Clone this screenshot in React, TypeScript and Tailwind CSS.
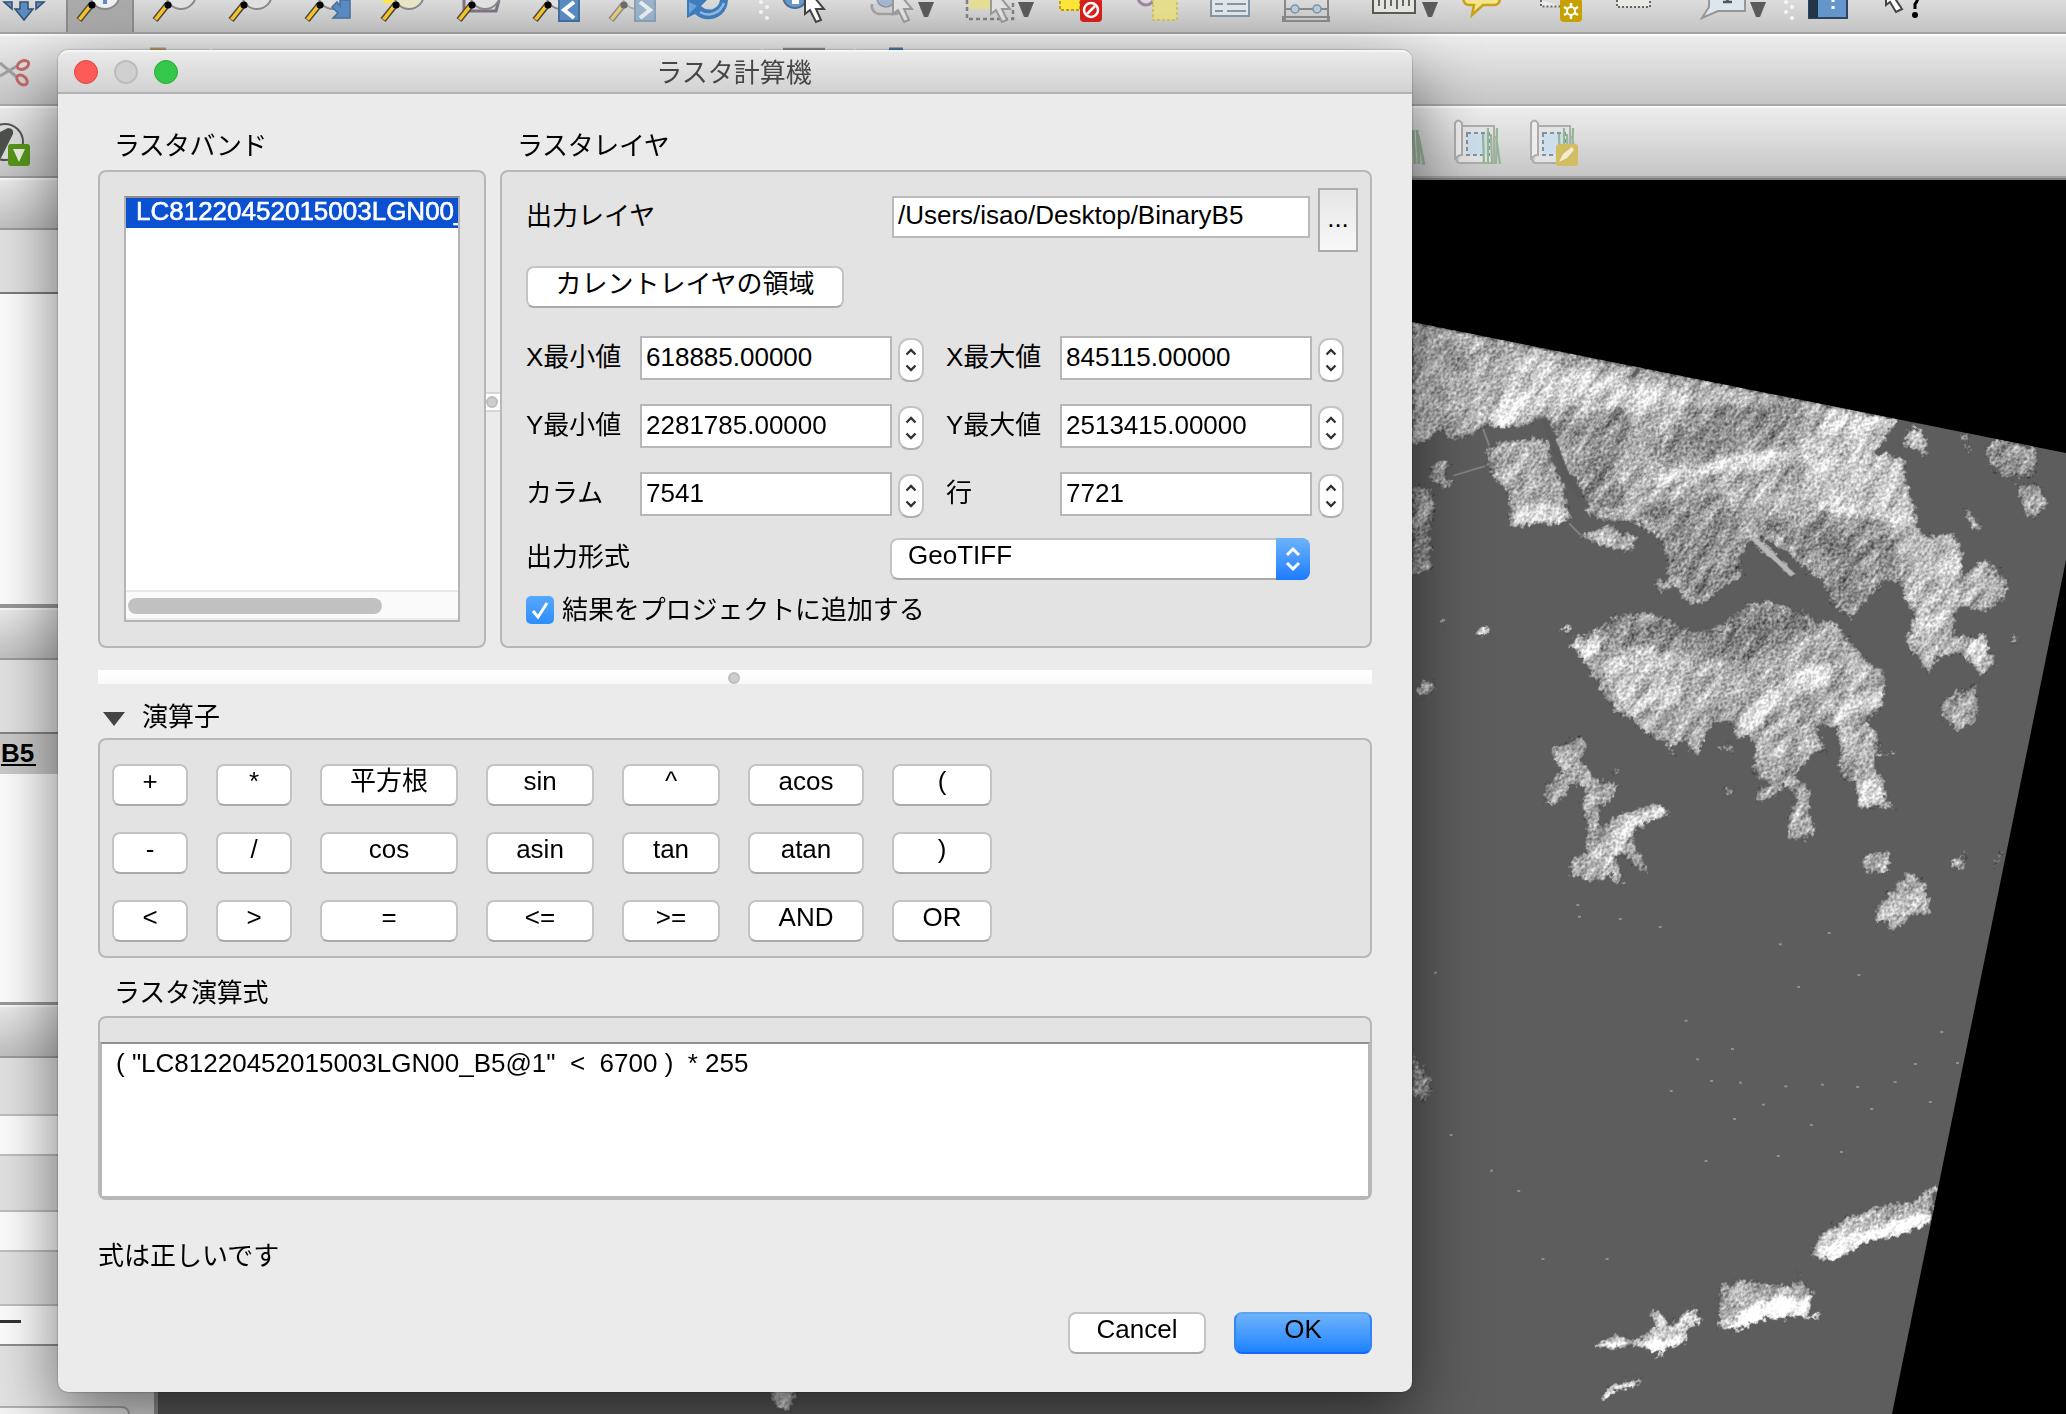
import React from "react";

const FONT = "font-['Liberation_Sans','Noto_Sans_CJK_JP',sans-serif]";

/* ---------- satellite raster ---------- */

const NORTH = [
  { c: "#a8a8a8", p: "28,-218 1172,52 1150,75 1140,110 1120,150 1165,155 1195,180 1185,235 1210,290 1220,365 1250,380 1305,372 1325,430 1325,490 1380,443 1430,500 1420,560 1380,592 1330,578 1310,585 1305,655 1350,665 1378,648 1385,710 1407,730 1370,772 1320,710 1275,710 1245,765 1190,680 1210,600 1190,570 1180,510 1140,508 1062,612 1010,565 1020,530 960,480 900,420 845,378 930,488 922,497 822,392 795,430 805,490 760,525 715,575 670,565 650,520 610,538 600,510 630,500 625,430 605,385 560,345 470,335 440,320 440,290 460,265 430,270 420,215 390,210 375,160 355,70 335,48 310,68 260,82 195,75 170,102 120,110 100,85 28,132" },
  { c: "#a6a6a6", p: "200,145 230,115 320,105 350,120 355,170 385,240 400,330 380,350 340,342 265,360 255,340 260,265 220,220" },
  { c: "#a8a8a8", p: "425,380 490,350 560,380 540,425 500,415 460,405" },
  { c: "#989898", p: "68,215 80,170 120,172 105,210 125,235 100,250" },
  { c: "#8e8e8e", p: "28,230 70,250 85,300 75,340 70,400 75,470 28,495" },
  { c: "#a2a2a2", p: "400,680 415,660 470,640 510,600 570,595 640,615 660,640 690,650 740,640 790,600 830,565 870,562 960,600 975,620 1020,620 1060,670 1090,720 1145,770 1135,860 1100,895 1130,950 1115,1010 1140,1080 1145,1120 1170,1142 1080,1142 1070,1070 1040,1060 1030,920 980,910 1005,985 975,988 930,1050 965,1090 965,1160 980,1215 955,1232 915,1228 915,1150 935,1120 905,1075 880,1110 840,1130 840,1095 870,1070 830,1045 835,960 820,945 790,945 780,900 745,900 720,930 705,1000 675,980 680,960 640,965 590,945 550,900 505,870 470,810 430,730" },
  { c: "#b0b0b0", p: "755,965 780,958 785,980 760,982" },
  { c: "#a8a8a8", p: "352,985 420,940 440,960 430,1010 460,1060 500,1070 518,1085 500,1115 470,1140 470,1190 540,1150 600,1130 640,1150 620,1178 590,1170 545,1220 588,1330 570,1320 520,1270 508,1290 527,1352 510,1350 490,1325 465,1352 400,1330 405,1290 440,1265 440,1180 430,1170 430,1080 395,1075 395,1105 360,1135 338,1130 340,1080 385,1045 370,1020" },
  { c: "#9c9c9c", p: "1270,860 1300,820 1355,795 1365,860 1350,905 1318,930 1280,890" },
  { c: "#969696", p: "1382,120 1410,110 1500,135 1505,170 1490,220 1420,215 1385,180" },
  { c: "#a0a0a0", p: "1450,235 1500,232 1525,290 1500,330 1470,325" },
  { c: "#b4b4b4", p: "1180,130 1205,68 1245,110 1235,165 1215,135" },
  { c: "#b4b4b4", p: "1320,92 1335,95 1347,150 1335,140" },
  { c: "#b4b4b4", p: "1330,300 1375,360 1350,360 1328,325" },
  { c: "#b4b4b4", p: "1088,1278 1110,1268 1150,1262 1153,1320 1095,1328" },
  { c: "#b0b0b0", p: "1120,1420 1200,1320 1238,1350 1250,1440 1205,1442 1160,1490 1145,1458 1120,1460" },
  { c: "#c0c0c0", p: "1295,1290 1315,1278 1330,1252 1325,1310 1305,1315" },
  { c: "#b0b0b0", p: "1397,1312 1415,1255 1416,1285" },
  { c: "#a0a0a0", p: "38,820 50,785 85,790 75,825 50,832" },
  { c: "#d8d8d8", p: "178,655 205,630 207,662" },
  { c: "#c8c8c8", p: "370,645 405,628 392,652" },
  { c: "#c8c8c8", p: "762,1088 785,1085 785,1102 768,1104" },
  { c: "#d0d0d0", p: "1438,668 1450,660 1457,680 1440,682" },
  { c: "#c0c0c0", p: "90,615 106,615 104,628 92,626" },
  { c: "#b0b0b0", p: "495,1045 505,1030 513,1040 505,1053" },
  { c: "#b8b8b8", p: "628,962 638,962 650,1008 640,1000" },
  { c: "#c8c8c8", p: "1120,990 1168,985 1168,992 1130,1000" },
];

/* brighter ridges and darker urban districts laid over the land */
const RELIEF = [
  { c: "#c8c8c8", p: "230,10 280,-125 600,-45 640,-30 700,0 690,10 560,40 440,30 330,-20 300,60 240,75 190,50" },
  { c: "#dcdcdc", p: "225,15 330,-10 320,40 250,70 195,50" },
  { c: "#cecece", p: "1000,20 1170,52 1130,130 1080,150 980,150" },
  { c: "#d4d4d4", p: "590,215 700,185 800,150 930,145 900,190 820,205 700,210 600,250" },
  { c: "#c2c2c2", p: "960,160 1160,155 1190,200 1210,320 1210,370 1130,330 1050,350 960,280" },
  { c: "#888888", p: "350,60 520,20 560,100 500,200 540,300 440,300 410,200" },
  { c: "#888888", p: "560,290 760,260 820,390 790,490 700,560 640,480 610,380" },
  { c: "#888888", p: "690,20 950,5 930,130 780,150 620,190 640,80" },
  { c: "#888888", p: "860,340 1000,310 1150,340 1180,480 1140,500 1050,590 950,450" },
  { c: "#bababa", p: "1200,390 1300,380 1320,460 1300,640 1240,750 1200,660 1230,560 1190,500" },
  { c: "#dcdcdc", p: "1330,690 1370,655 1385,700 1365,765" },
  { c: "#808080", p: "470,640 520,605 640,620 700,655 790,610 850,570 960,605 960,640 880,700 780,740 640,700 520,690" },
  { c: "#bebebe", p: "480,730 580,690 700,740 660,850 540,875 490,800" },
  { c: "#d2d2d2", p: "940,750 1015,735 1000,790 900,860 820,930 790,900 850,830" },
  { c: "#c6c6c6", p: "1000,850 1135,800 1130,860 1030,910" },
  { c: "#e0e0e0", p: "405,690 470,670 470,710 430,725" },
  { c: "#d4d4d4", p: "1080,1070 1135,1060 1140,1130 1080,1135" },
  { c: "#d0d0d0", p: "500,1210 600,1135 630,1155 560,1200 520,1260 480,1300 460,1290" },
  { c: "#cccccc", p: "270,300 370,290 390,345 270,350" },
];

const SOUTH = [
  { c: "#989898", p: "28,440 45,510 55,488 68,520 75,565 55,605 28,580" },
  { c: "#b0b0b0", p: "967,1065 990,1000 1060,950 1145,910 1205,905 1265,848 1250,965 1200,1000 1100,1025 1020,1083" },
  { c: "#ffffff", p: "975,1065 1040,1010 1100,985 1250,935 1248,965 1200,1000 1100,1028 1020,1083" },
  { c: "#a8a8a8", p: "750,1160 800,1140 860,1150 910,1155 950,1140 973,1180 960,1250 850,1260 800,1293 750,1285" },
  { c: "#ffffff", p: "800,1240 850,1200 950,1190 970,1180 960,1250 850,1260 800,1292 775,1288" },
  { c: "#ffffff", p: "940,1257 965,1250 1000,1232 980,1260" },
  { c: "#c0c0c0", p: "932,1110 948,1115 946,1125" },
  { c: "#c8c8c8", p: "453,1340 510,1300 550,1325 600,1280 593,1235 608,1228 635,1275 680,1228 702,1225 710,1260 670,1295 680,1325 600,1355 545,1335 520,1345" },
  { c: "#ffffff", p: "455,1340 520,1325 540,1330 520,1348" },
  { c: "#ffffff", p: "560,1330 640,1320 680,1320 630,1350 595,1356" },
  { c: "#f4f4f4", p: "640,1285 705,1245 705,1268 660,1295" },
  { c: "#e0e0e0", p: "600,1380 612,1355 625,1358" },
  { c: "#ffffff", p: "470,1495 500,1455 575,1432 545,1467 510,1470 480,1500" },
];

const SPECKS: [number, number][] = [
  [418, 15], [422, 50], [518, 57], [612, 81], [1010, 99], [895, 133], [1080, 225], [938, 261], [673, 362], [782, 447],
  [801, 548], [638, 573], [908, 559], [994, 554], [1077, 561], [1165, 546], [1213, 492], [1312, 489], [1248, 606], [1110, 627],
  [855, 614], [787, 657], [733, 543], [1039, 756], [890, 768], [720, 783], [120, 705], [215, 812], [279, 873], [336, 1077],
  [487, 1077], [1275, 396], [968, 675], [83, 218], [700, 478],
];

function SatelliteMap() {
  return (
    <svg className="absolute left-[158px] top-[180px]" width="1908" height="1234" viewBox="158 180 1908 1234">
      <defs>
        {/* the filter runs in a rotated frame so that the ridges follow the north-east grain of the hills */}
        <filter id="land" filterUnits="userSpaceOnUse" x="600" y="-100" width="2000" height="1900" colorInterpolationFilters="sRGB">
          <feTurbulence type="fractalNoise" baseFrequency="0.2" numOctaves="2" seed="4" result="edge" />
          <feDisplacementMap in="SourceGraphic" in2="edge" scale="12" xChannelSelector="R" yChannelSelector="G" result="shape" />
          <feTurbulence type="fractalNoise" baseFrequency="0.035 0.11" numOctaves="3" seed="11" />
          <feColorMatrix type="matrix" values="1 0 0 0 0 1 0 0 0 0 1 0 0 0 0 0 0 0 0 1" result="hills" />
          <feTurbulence type="fractalNoise" baseFrequency="0.3 0.4" numOctaves="2" seed="7" />
          <feColorMatrix type="matrix" values="1 0 0 0 0 1 0 0 0 0 1 0 0 0 0 0 0 0 0 1" result="grain" />
          <feComposite in="hills" in2="grain" operator="arithmetic" k2="0.55" k3="0.75" k4="-0.14" result="noise" />
          <feGaussianBlur in="shape" stdDeviation="2.5" result="soft" />
          <feComposite in="soft" in2="shape" operator="arithmetic" k2="0.5" k3="0.5" result="base" />
          <feComposite in="noise" in2="base" operator="arithmetic" k2="1" k3="1" k4="-0.47" result="lit" />
          <feComposite in="lit" in2="shape" operator="in" />
        </filter>
        <clipPath id="scene">
          <polygon points="158,71 1412,322 2066,453 2066,560 1892,1414 158,1414" />
        </clipPath>
      </defs>
      <rect x="158" y="180" width="1908" height="1234" fill="#000" />
      <g clipPath="url(#scene)">
        <rect x="158" y="180" width="1908" height="1234" fill="#5d5d5d" />
        <g transform="rotate(-52 1730 860)">
          <g filter="url(#land)">
            <g transform="rotate(52 1730 860)">
              <g transform="translate(1400 400) scale(.42474 .35714)">
                {NORTH.map((s, i) => <polygon key={i} points={s.p} fill={s.c} />)}
                {RELIEF.map((s, i) => <polygon key={i} points={s.p} fill={s.c} />)}
              </g>
              <g transform="translate(1400 900) scale(.42474 .33333)">
                {SOUTH.map((s, i) => <polygon key={i} points={s.p} fill={s.c} />)}
              </g>
              <polygon points="770,1385 795,1385 794,1402 785,1412 772,1404" fill="#bdbdbd" />
            </g>
          </g>
        </g>
        <g transform="translate(1400 400) scale(.42474 .35714)" fill="none">
          <path d="M338 50 390 215 425 270 M362 120 398 230" stroke="#5a5a5a" strokeWidth="14" />
          <path d="M562 -88 548 -65" stroke="#5d5d5d" strokeWidth="10" />
          <path d="M860 395 930 455" stroke="#5d5d5d" strokeWidth="9" />
          <path d="M830 385 925 490" stroke="#b8b8b8" strokeWidth="12" />
          <path d="M195 80 210 128 M125 212 200 185 M398 345 425 378" stroke="#8b8b8b" strokeWidth="4" />
          <path d="M655 640 760 650" stroke="#5d5d5d" strokeWidth="5" strokeDasharray="14 9" />
        </g>
        <g transform="translate(1400 900) scale(.42474 .33333)" fill="#909090">
          {SPECKS.map(([x, y], i) => <rect key={i} x={x - 3} y={y - 3} width="7" height="6" />)}
        </g>
      </g>
    </svg>
  );
}

/* ---------- main window chrome ---------- */

/* Toolbar cell; its drawing uses the toolbar's own x axis. */
function Cell({ x, w, h = 32, children }: { x: number; w: number; h?: number; children?: React.ReactNode }) {
  return (
    <svg className="shrink-0" width={w} height={h} viewBox={`${x} 0 ${w} ${h}`}>
      {children}
    </svg>
  );
}

function Lens({ x, faded, fill = "#e2e2e2" }: { x: number; faded?: boolean; fill?: string }) {
  return (
    <g transform={`translate(${x} 0)`} opacity={faded ? 0.5 : 1}>
      <circle cx="28" cy="-6" r="15" fill={fill} stroke="#8a8a8a" strokeWidth="2" />
      <path d="M15 4 2 20" stroke="#4a4a40" strokeWidth="6.500" />
      <path d="M14 5 2.500 19.500" stroke="#fcc629" strokeWidth="3.600" />
      <circle cx="15" cy="5" r="3.600" fill="#000" />
    </g>
  );
}

function Arrow({ x }: { x: number }) {
  return <path d={`M${x - 8} 2h16l-6 15h-4z`} fill="#5b5b5b" />;
}

function Pointer({ x, faded }: { x: number; faded?: boolean }) {
  return (
    <path
      d={`M${x} -14V14l5-4 6 12 5-2-5-11h8z`}
      fill={faded ? "#e2e2e2" : "#fff"}
      stroke={faded ? "#9a9a9a" : "#444"}
      strokeWidth="2"
    />
  );
}

function Grip({ x }: { x: number }) {
  return (
    <g fill="#f6f6f6">
      <circle cx={x - 3} cy="2" r="2" /><circle cx={x + 3} cy="7" r="2" />
      <circle cx={x - 3} cy="12" r="2" /><circle cx={x + 3} cy="18" r="2" />
    </g>
  );
}

function NavBar() {
  return (
    <div className="flex h-[34px] w-full items-start overflow-hidden border-b-2 border-[#a3a3a3] bg-gradient-to-b from-[#dcdcdc] to-[#c4c4c4]">
      <Cell x={0} w={66}>
        <path d="M24 20 15 9h5V2h8v7h5z" fill="#5b8cc4" stroke="#33506f" strokeWidth="1.5" />
        <path d="M4 2h8v7zM44 2h-8l0 7z" fill="#5b8cc4" stroke="#33506f" strokeWidth="1.5" />
      </Cell>
      <div className="flex h-8 w-[68px] shrink-0 border-x-2 border-[#8d8d8d] bg-[#ababab]">
        <Cell x={68} w={64}>
          <Lens x={77} fill="#eef0f2" />
          <path d="M105 4V-6" stroke="#5b8cc4" strokeWidth="4" />
        </Cell>
      </div>
      <Cell x={134} w={80}><Lens x={153} /></Cell>
      <Cell x={214} w={76}><Lens x={229} /></Cell>
      <Cell x={290} w={76}>
        <Lens x={305} />
        <path d="M340 0h10v18h-17l5-5-6-6 5-5 3 4z" fill="#5b8cc4" stroke="#44719f" strokeWidth="1.5" />
      </Cell>
      <Cell x={366} w={76}>
        <Lens x={381} fill="#ece6c8" />
        <path d="M383 0h10v3h-10z" fill="#ffe93c" />
      </Cell>
      <Cell x={442} w={76}>
        <path d="M464 0v11h32l3-11" fill="#dcd4de" stroke="#7f7384" strokeWidth="3" />
        <Lens x={457} />
      </Cell>
      <Cell x={518} w={76}>
        <Lens x={533} />
        <rect x="558" y="0" width="22" height="22" fill="#5b8cc4" /><rect x="559" y="-4" width="20" height="25" fill="none" stroke="#44719f" strokeWidth="2" />
        <path d="M574 2 564 10 574 18" fill="none" stroke="#fff" strokeWidth="4" />
      </Cell>
      <Cell x={594} w={76}>
        <Lens x={609} faded />
        <rect x="634" y="0" width="22" height="22" fill="#9bb4cc" /><rect x="635" y="-4" width="20" height="25" fill="none" stroke="#8ba2b8" strokeWidth="2" />
        <path d="M640 2 650 10 640 18" fill="none" stroke="#e8edf2" strokeWidth="4" />
      </Cell>
      <Cell x={670} w={76}>
        <path d="M687 0v18l8-4c10 10 32 6 33-14h-8c-1 9-12 13-19 6l6-6z" fill="#3f7dbc" />
        <path d="M689 2v12l8-8z" fill="#6ca4dc" />
        <path d="M700 12c8 5 20 2 24-9" fill="none" stroke="#8fbae6" strokeWidth="2.500" />
      </Cell>
      <Cell x={746} w={36}><Grip x={764} /></Cell>
      <Cell x={782} w={78}>
        <circle cx="795" cy="-4" r="12" fill="#6c98c8" stroke="#44719f" strokeWidth="2" /><rect x="792" y="-2" width="7" height="6" fill="#fff" />
        <Pointer x={805} />
      </Cell>
      <Cell x={860} w={92}>
        <path d="M872 4a8 8 0 0 0 8 10h16a8 8 0 0 0 4-12" fill="#d0d0d0" stroke="#a2a2a2" strokeWidth="2.5" />
        <circle cx="886" cy="-2" r="9" fill="#a4b8d0" stroke="#8a98aa" strokeWidth="1.5" />
        <Pointer x={893} faded />
        <Arrow x={926} />
      </Cell>
      <Cell x={952} w={98}>
        <path d="M969 0h22v9h-22z" fill="#e6df96" />
        <path d="M967 0v19h46V0" fill="none" stroke="#808080" strokeWidth="2.5" strokeDasharray="4 3" />
        <Pointer x={991} faded />
        <Arrow x={1026} />
      </Cell>
      <Cell x={1050} w={70}>
        <rect x="1060" y="-4" width="20" height="14" fill="#ffe63c" stroke="#c4a000" strokeWidth="2" strokeDasharray="3 2" />
        <rect x="1080" y="-2" width="22" height="24" rx="4" fill="#d8201c" />
        <circle cx="1091" cy="10" r="7" fill="#d8201c" stroke="#fff" strokeWidth="2.5" /><path d="m1087 14 8-8" stroke="#fff" strokeWidth="2.5" />
      </Cell>
      <Cell x={1120} w={76}>
        <circle cx="1146" cy="-3" r="8" fill="none" stroke="#9e86a8" strokeWidth="3" />
        <rect x="1153" y="-4" width="24" height="24" fill="#e8df8e" stroke="#d3c566" strokeWidth="2" strokeDasharray="3 2" />
      </Cell>
      <Cell x={1196} w={76}>
        <rect x="1211" y="-6" width="38" height="22" fill="#e3e7ea" stroke="#8498a8" strokeWidth="2" />
        <path d="M1215 4h8M1227 4h19M1215 11h8M1227 11h19" stroke="#8498a8" strokeWidth="2" />
      </Cell>
      <Cell x={1272} w={76}>
        <path d="M1285 -4v25M1328 -4v25M1283 17h46v4h-46zM1285 9h43" fill="none" stroke="#8a8a8a" strokeWidth="2" />
        <circle cx="1295" cy="9" r="4" fill="#b9cedb" stroke="#7d95a5" strokeWidth="1.5" /><circle cx="1317" cy="9" r="4" fill="#b9cedb" stroke="#7d95a5" strokeWidth="1.5" />
      </Cell>
      <Cell x={1348} w={100}>
        <rect x="1373" y="-6" width="42" height="19" fill="#e6e7e2" stroke="#5a5c55" strokeWidth="2" />
        <path d="M1379 0v6M1385 0v9M1391 0v6M1397 0v9M1403 0v6M1409 0v6" stroke="#5a5c55" strokeWidth="1.8" />
        <Arrow x={1430} />
      </Cell>
      <Cell x={1448} w={76}>
        <path d="M1463 -2q1 7 6 7h5l-2 10 11-10h12q5-1 5-7" fill="#f3e58a" stroke="#c9a21c" strokeWidth="2.5" />
      </Cell>
      <Cell x={1524} w={76}>
        <path d="M1541 0v6.500h20" fill="#ececec" stroke="#666" strokeWidth="2" strokeDasharray="2 2" />
        <rect x="1560" y="-2" width="22" height="24" rx="4" fill="#c7a100" />
        <path d="M1571 3v16M1564 7l14 8M1578 7l-14 8" stroke="#fff" strokeWidth="2.5" /><circle cx="1571" cy="11" r="4" fill="#c7a100" stroke="#fff" strokeWidth="2" />
      </Cell>
      <Cell x={1600} w={76}>
        <path d="M1617 0h33v6.500h-33z" fill="#e9e9e6" /><path d="M1617 0v7h33V0" fill="none" stroke="#666" strokeWidth="2" strokeDasharray="2 2" />
      </Cell>
      <Cell x={1676} w={102}>
        <path d="M1709 -4v11l-7 11 16-7h27V-4" fill="#dce6ee" stroke="#979797" strokeWidth="2" />
        <path d="M1723 2h9M1727.500 -4v6" stroke="#4e5660" strokeWidth="2.500" />
        <Arrow x={1758} />
      </Cell>
      <Cell x={1778} w={24}><Grip x={1789} /></Cell>
      <Cell x={1802} w={66}>
        <rect x="1809" y="-4" width="38" height="22" fill="#6496cc" stroke="#2b4560" strokeWidth="2" /><rect x="1809" y="-4" width="9" height="22" fill="#243547" />
        <path d="M1833 6v3M1833 -1v3" stroke="#fff" strokeWidth="3" />
      </Cell>
      <Cell x={1868} w={80}>
        <path d="M1886 -8V5l4-3 6 10 6-3-8-12" fill="#fff" stroke="#444" strokeWidth="2" />
        <path d="M1918 -4q0 5-3 8v5" fill="none" stroke="#000" strokeWidth="3" /><circle cx="1915" cy="15" r="3" />
      </Cell>
    </div>
  );
}

function EditBar() {
  return (
    <div className="flex h-[72px] w-full items-start border-b-2 border-t-2 border-b-[#a8a8a8] border-t-[#fbfbfb] bg-gradient-to-b from-[#ededed] to-[#c6c6c6]">
      <Cell x={0} w={60} h={68}>
        <path d="M0 27 18 42M0 40 17 30" stroke="#a0a0a0" strokeWidth="3" />
        <ellipse cx="23" cy="29" rx="6" ry="4" transform="rotate(-25 23 29)" fill="none" stroke="#c46a6a" strokeWidth="3" />
        <ellipse cx="22" cy="44" rx="6" ry="4" transform="rotate(40 22 44)" fill="none" stroke="#c46a6a" strokeWidth="3" />
      </Cell>
      <Cell x={60} w={900} h={68}>
        <path d="M150 13h16" stroke="#b89a66" strokeWidth="3" /><path d="M211 12v2M762 12v2M855 12v2" stroke="#f2f2f2" strokeWidth="3" />
        <path d="M783 13h42" stroke="#8e8e8e" strokeWidth="2.500" /><path d="M889 13h14" stroke="#4c7ba6" strokeWidth="3" />
      </Cell>
    </div>
  );
}

function GrassMap({ x, pencil }: { x: number; pencil?: boolean }) {
  return (
    <g transform={`translate(${x} 0)`}>
      <path d="M8 18h32v37H5" fill="#e3e3e3" stroke="#adadad" strokeWidth="2" />
      <path d="M1 52V15q3-5 7 0v32q-5 0-6 4 1 5 6 4" fill="#ededed" stroke="#adadad" strokeWidth="2" />
      <rect x="13" y="25" width="22" height="22" fill="#cddfeb" stroke="#7f93a2" strokeWidth="2" strokeDasharray="4 3" />
      <path d="M30 56 29 26M34 56V20M38 56l-1-30M42 56l1-36M46 56l-4-28" stroke="#94b694" strokeWidth="2.200" />
      {pencil && (
        <g>
          <rect x="26" y="36" width="22" height="22" rx="3" fill="#d3bd63" />
          <path d="m29 54 4-8 9-7 2 3-7 8z" fill="#f2ecd4" />
        </g>
      )}
    </g>
  );
}

function RasterBar() {
  return (
    <div className="flex h-[72px] w-full items-start justify-between border-b-2 border-t-2 border-b-[#a0a0a0] border-t-[#fbfbfb] bg-gradient-to-b from-[#ededed] to-[#c6c6c6]">
      <Cell x={0} w={60} h={68}>
        <circle cx="5" cy="34" r="18" fill="#e0e0e0" stroke="#555" strokeWidth="2" />
        <path d="M0 24 8 20q6 0 5 6L1 50H0z" fill="#4f524c" />
        <rect x="8" y="36" width="22" height="22" rx="3" fill="#58981a" />
        <path d="M13 41h12l-6 13z" fill="#eef5e4" />
      </Cell>
      <Cell x={1400} w={666} h={68}>
        <path d="M1415 56 1413 22M1419 56l-2-34M1424 57l-6-30" stroke="#9ab59a" strokeWidth="3" />
        <GrassMap x={1454} />
        <GrassMap x={1530} pencil />
      </Cell>
    </div>
  );
}

function DockHeader({ className }: { className: string }) {
  return <div className={`${className} w-full shrink-0 border-b-2 border-t-2 border-b-[#9d9d9d] border-t-[#fafafa] bg-gradient-to-b from-[#ececec] to-[#c2c2c2]`} />;
}

function Docks() {
  return (
    <div className="flex h-[1236px] w-[158px] flex-col overflow-hidden border-r-4 border-[#979797] bg-[#e4e4e4]">
      <DockHeader className="h-[52px]" />
      <div className="h-[64px] shrink-0 border-b-2 border-[#7d7d7d]" />
      <div className="h-[314px] shrink-0 border-b-4 border-[#9a9a9a] bg-white" />
      <DockHeader className="h-[52px]" />
      <div className="h-[74px] shrink-0 border-b-2 border-[#858585]" />
      <div className="h-[40px] shrink-0 bg-[#cbcbcb]">
        <span className="ml-[1px] mt-[6px] inline-block h-[26px] w-[35px] border-b-2 border-black text-[26px] font-bold leading-[26px]">B5</span>
      </div>
      <div className="h-[231px] shrink-0 border-b-[3px] border-[#9a9a9a] bg-white" />
      <DockHeader className="h-[53px]" />
      <div className="h-[58px] shrink-0 border-b-2 border-[#c0c0c0]" />
      <div className="h-[40px] shrink-0 border-b-2 border-[#c0c0c0] bg-white" />
      <div className="h-[56px] shrink-0 border-b-2 border-[#c0c0c0]" />
      <div className="h-[40px] shrink-0 border-b-2 border-[#c0c0c0] bg-white" />
      <div className="h-[54px] shrink-0 border-b-2 border-[#c0c0c0]" />
      <div className="h-[40px] shrink-0 border-b-2 border-[#8e8e8e] bg-white pt-[14px]">
        <div className="h-[3px] w-[21px] bg-[#333]" />
      </div>
      <div className="mt-[60px] h-10 w-[130px] shrink-0 rounded-tr-lg border-r-2 border-t-2 border-[#b0b0b0] bg-[#f4f4f4]" />
    </div>
  );
}

/* ---------- dialog controls ---------- */

function PushButton({ className, children }: { className: string; children: React.ReactNode }) {
  return (
    <button className={`${className} h-[42px] shrink-0 whitespace-pre rounded-[8px] border-2 border-[#c4c4c4] border-b-[#a9a9a9] bg-white pb-[8px] text-center leading-[26px]`}>
      {children}
    </button>
  );
}

function Spinner() {
  return (
    <div className="ml-[6px] mt-[2px] flex h-[44px] w-[26px] items-center justify-center rounded-[11px] border-2 border-[#c4c4c4] border-b-[#aeaeae] bg-white">
      <svg width="12" height="28" viewBox="0 0 12 28" fill="none" stroke="#333" strokeWidth="2.400">
        <path d="m1.500 8.500 4.500-4.500L10.500 8.500M1.500 19.500 6 24l4.500-4.500" />
      </svg>
    </div>
  );
}

function SpinField({ label, value, className }: { label: string; value: string; className: string }) {
  return (
    <div className={`${className} flex`}>
      <span className="w-[114px] whitespace-nowrap pt-[8px] leading-[26px]">{label}</span>
      <div className="h-[44px] w-[252px] border-2 border-[#b6b6b6] bg-white pl-[4px] pt-[6px] leading-[26px]">{value}</div>
      <Spinner />
    </div>
  );
}

const OPERATORS = [
  ["+", "*", "平方根", "sin", "^", "acos", "("],
  ["-", "/", "cos", "asin", "tan", "atan", ")"],
  ["<", ">", "=", "<=", ">=", "AND", "OR"],
];
const WIDTHS = ["w-[76px]", "w-[76px]", "w-[138px]", "w-[108px]", "w-[98px]", "w-[116px]", "w-[100px]"];

const BOX = "rounded-[8px] border-2 border-[#b7b7b7] bg-[#e3e3e3]";

function BandGroup() {
  return (
    <div className={`${BOX} h-[478px] w-[388px] p-[24px]`}>
      <div className="flex h-[426px] w-[336px] flex-col border-2 border-[#b4b4b4] border-t-[#8e8e8e] bg-white">
        <div className="h-[30px] overflow-hidden whitespace-nowrap bg-[#0a50d0] pl-[10px] leading-[26px] text-white [-webkit-text-stroke:0.6px_white]">
          LC81220452015003LGN00_
        </div>
        <div className="mt-auto h-[30px] border-b-2 border-t-2 border-b-[#ededed] border-t-[#e8e8e8] bg-[#fafafa] pl-[2px] pt-[6px]">
          <div className="h-[16px] w-[254px] rounded-full bg-[#c1c1c1]" />
        </div>
      </div>
    </div>
  );
}

function LayerGroup() {
  return (
    <div className={`${BOX} flex h-[478px] w-[872px] flex-col pl-[24px] pt-[16px]`}>
      <div className="flex h-[64px]">
        <span className="w-[366px] pt-[15px] leading-[26px]">出力レイヤ</span>
        <div className="mt-[8px] h-[42px] w-[418px] border-2 border-[#b9b9b9] bg-white pl-[4px] pt-[4px] leading-[26px]">/Users/isao/Desktop/BinaryB5</div>
        <button className="ml-[8px] h-[64px] w-[40px] border-2 border-[#acacac] bg-gradient-to-b from-[#e6e6e6] to-[#f8f8f8] pb-[5px] text-center leading-[26px]">...</button>
      </div>
      <PushButton className="mt-[14px] w-[318px] pt-[1px]">カレントレイヤの領域</PushButton>
      <div className="mt-[28px] flex flex-col gap-[22px]">
        <div className="flex h-[46px]"><SpinField className="w-[420px]" label="X最小値" value="618885.00000" /><SpinField className="" label="X最大値" value="845115.00000" /></div>
        <div className="flex h-[46px]"><SpinField className="w-[420px]" label="Y最小値" value="2281785.00000" /><SpinField className="" label="Y最大値" value="2513415.00000" /></div>
        <div className="flex h-[46px]"><SpinField className="w-[420px]" label="カラム" value="7541" /><SpinField className="" label="行" value="7721" /></div>
      </div>
      <div className="mt-[20px] flex h-[42px]">
        <span className="w-[364px] pt-[6px] leading-[26px]">出力形式</span>
        <div className="relative h-[42px] w-[420px] rounded-[8px] border-2 border-[#c4c4c4] border-b-[#a9a9a9] bg-white pl-[16px] pt-[2px] leading-[26px]">
          GeoTIFF
          <div className="absolute -right-[2px] -top-[2px] flex h-[42px] w-[34px] items-center justify-center rounded-r-[8px] bg-gradient-to-b from-[#6cb3fa] to-[#1a7bff]">
            <svg width="16" height="26" viewBox="0 0 16 26" fill="none" stroke="#fff" strokeWidth="3">
              <path d="m2 9 6-6 6 6M2 17l6 6 6-6" />
            </svg>
          </div>
        </div>
      </div>
      <label className="mt-[16px] flex h-[28px] items-start">
        <span className="flex h-[28px] w-[28px] items-center justify-center rounded-[5px] bg-gradient-to-b from-[#56a8fb] to-[#2d8dfa]">
          <svg width="20" height="20" viewBox="0 0 20 20" fill="none" stroke="#fff" strokeWidth="3"><path d="m3 11 5 6L17 3" /></svg>
        </span>
        <span className="ml-[8px] whitespace-nowrap pt-[1px] leading-[26px] tracking-[-0.1px]">結果をプロジェクトに追加する</span>
      </label>
    </div>
  );
}

function Dialog() {
  return (
    <div className="absolute left-[58px] top-[50px] flex h-[1342px] w-[1354px] flex-col overflow-visible rounded-[10px] bg-[#ebebeb] shadow-[0_26px_70px_rgba(0,0,0,0.55),0_0_2px_rgba(0,0,0,0.45)]">
      <div className="flex h-[44px] shrink-0 rounded-t-[10px] border-b-2 border-t-2 border-b-[#b1b1b1] border-t-[#f6f6f6] bg-gradient-to-b from-[#eaeaea] to-[#d2d2d2]">
        <div className="flex w-[120px] gap-[16px] pl-[16px] pt-[8px]">
          <span className="h-[24px] w-[24px] rounded-full border border-[#e2463f] bg-[#fc5b57]" />
          <span className="h-[24px] w-[24px] rounded-full border-2 border-[#bdbdbd] bg-[#d0d0d0]" />
          <span className="h-[24px] w-[24px] rounded-full border border-[#27ab35] bg-[#34c84a]" />
        </div>
        <div className="flex-1 pr-[122px] pt-[8px] text-center leading-[26px] text-[#464646]">ラスタ計算機</div>
      </div>
      <div className="flex flex-col px-[40px]">
        <div className="flex h-[76px] pt-[39px] leading-[26px]">
          <span className="w-[402px] pl-[16px] tracking-[-0.7px]">ラスタバンド</span>
          <span className="pl-[17px] tracking-[-0.4px]">ラスタレイヤ</span>
        </div>
        <div className="flex">
          <BandGroup />
          <div className="mt-[222px] flex h-[20px] w-[14px] items-center border-b-2 border-t-2 border-[#d6d6d6] bg-white">
            <span className="h-[12px] w-[12px] rounded-full border-2 border-[#bdbdbd] bg-[#cecece]" />
          </div>
          <LayerGroup />
        </div>
        <div className="mt-[22px] flex h-[14px] items-center justify-center bg-gradient-to-b from-white to-[#f9f9f9]">
          <span className="mr-[2px] mt-[2px] h-[12px] w-[12px] rounded-full border-2 border-[#bdbdbd] bg-[#cecece]" />
        </div>
        <div className="flex h-[54px] pl-[4px] pt-[20px]">
          <svg className="mt-[7px]" width="24" height="16" viewBox="0 0 24 16"><path d="M1 1h22L12 15z" fill="#444" /></svg>
          <span className="pl-[16px] leading-[26px]">演算子</span>
        </div>
        <div className={`${BOX} flex h-[220px] flex-col gap-[26px] pl-[12px] pt-[24px]`}>
          {OPERATORS.map((row, r) => (
            <div key={r} className="flex gap-[28px]">
              {row.map((op, i) => <PushButton key={op} className={WIDTHS[i]}>{op}</PushButton>)}
            </div>
          ))}
        </div>
        <div className="h-[58px] pl-[16px] pt-[22px] leading-[26px] tracking-[-0.2px]">ラスタ演算式</div>
        <div className={`${BOX} h-[184px] pt-[24px]`}>
          <div className="h-[156px] whitespace-pre border-2 border-[#b7b7b7] border-t-[#8e8e8e] bg-white pl-[14px] pt-[6px] leading-[26px]">
            {'( "LC81220452015003LGN00_B5@1"  <  6700 )  * 255'}
          </div>
        </div>
        <div className="mt-[43px] h-[26px] leading-[26px]">式は正しいです</div>
        <div className="mt-[43px] flex justify-end gap-[28px]">
          <PushButton className="w-[138px]">Cancel</PushButton>
          <button className="h-[42px] w-[138px] rounded-[8px] border-2 border-b-[#1468fb] border-l-[#3385f5] border-r-[#3385f5] border-t-[#5ba7f3] bg-gradient-to-b from-[#6cb3fa] to-[#1a82ff] pb-[8px] text-center leading-[26px]">OK</button>
        </div>
      </div>
    </div>
  );
}

export default function App() {
  return (
    <div className={`${FONT} relative h-[1414px] w-[2066px] overflow-hidden bg-black text-[26px] leading-[26px] text-black`}>
      <NavBar />
      <EditBar />
      <RasterBar />
      <Docks />
      <SatelliteMap />
      <div className="absolute left-[1412px] top-[178px] h-[2px] w-[654px] bg-[#7e7e7e]" />
      <Dialog />
    </div>
  );
}
